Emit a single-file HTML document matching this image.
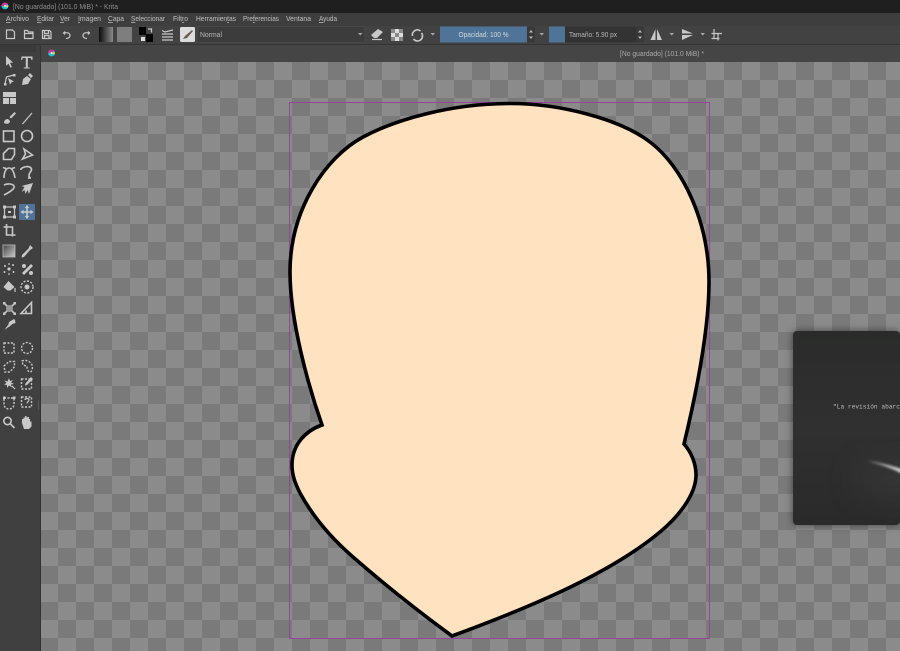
<!DOCTYPE html>
<html lang="es"><head><meta charset="utf-8"><title>Krita</title>
<style>html,body{margin:0;padding:0;width:900px;height:651px;overflow:hidden;background:#404040}
svg{display:block}
text{font-family:"Liberation Sans",sans-serif}
.m{font-size:7.5px;fill:#c0c0c0}
.i{fill:none;stroke:#c8c8c8;stroke-width:1.2}
.t{fill:none;stroke:#c8c8c8;stroke-width:1.6}
.f{fill:#c8c8c8;stroke:none}
.d{fill:none;stroke:#c8c8c8;stroke-width:1.4;stroke-dasharray:2 1.5}
</style></head><body>
<svg width="900" height="651" viewBox="0 0 900 651" xmlns="http://www.w3.org/2000/svg">
<defs>
<pattern id="c" x="40" y="62" width="36" height="36" patternUnits="userSpaceOnUse"><rect width="36" height="36" fill="#8b8b8b"/><rect width="18" height="18" fill="#7a7a7a"/><rect x="18" y="18" width="18" height="18" fill="#7a7a7a"/></pattern>
<pattern id="p2" x="391" y="29" width="8" height="8" patternUnits="userSpaceOnUse"><rect width="8" height="8" fill="#ddd"/><rect width="4" height="4" fill="#888"/><rect x="4" y="4" width="4" height="4" fill="#888"/></pattern>
<linearGradient id="g1" x1="0" x2="1"><stop offset="0" stop-color="#0c0c0c"/><stop offset="1" stop-color="#8a8a8a"/></linearGradient>
<linearGradient id="g2" x1="0" x2="1" y1="0" y2="1"><stop offset="0" stop-color="#444"/><stop offset="1" stop-color="#ccc"/></linearGradient>
<linearGradient id="card" x1="0" x2="0" y1="0" y2="1"><stop offset="0" stop-color="#2a2b2a"/><stop offset=".5" stop-color="#303030"/><stop offset="1" stop-color="#2a2a2a"/></linearGradient>
<filter id="b1" x="-50%" y="-50%" width="200%" height="200%"><feGaussianBlur stdDeviation="4"/></filter>
<filter id="b2" x="-50%" y="-100%" width="200%" height="300%"><feGaussianBlur stdDeviation="1.4"/></filter>
<filter id="b3" x="-60%" y="-60%" width="220%" height="220%"><feGaussianBlur stdDeviation="16"/></filter>
<clipPath id="cc"><rect x="793" y="331" width="107" height="194" rx="4"/></clipPath>
</defs>

<!-- chrome -->
<rect width="900" height="651" fill="#404040"/>
<rect width="900" height="13" fill="#1f1f1f"/>
<rect y="13" width="900" height="13" fill="#3e3e3e"/>
<rect y="26" width="900" height="19" fill="#424242"/>
<rect y="44" width="900" height="1" fill="#353535"/>
<rect x="41" y="45" width="859" height="17" fill="#454545"/>
<rect x="0" y="45" width="36" height="7" fill="#3a3a3a"/>
<rect x="40" y="45" width="1" height="606" fill="#333"/>

<!-- title -->
<circle cx="5" cy="6" r="3.400" fill="#18c4dc"/><path d="M1.600 6a3.400 3.400 0 0 1 6-2.200L5 6z" fill="#e42b9a"/><path d="M5 6l3.300-1a3.400 3.400 0 0 1-.6 3z" fill="#f0d040"/><circle cx="5" cy="6" r="1" fill="#eee"/>
<text x="13" y="9" font-size="7.5" fill="#8f8f8f" textLength="105" lengthAdjust="spacingAndGlyphs">[No guardado]  (101.0 MiB) * - Krita</text>

<!-- menu -->
<text class="m" x="6" y="21" textLength="23" lengthAdjust="spacingAndGlyphs"><tspan text-decoration="underline">A</tspan>rchivo</text>
<text class="m" x="37" y="21" textLength="17" lengthAdjust="spacingAndGlyphs"><tspan text-decoration="underline">E</tspan>ditar</text>
<text class="m" x="60" y="21" textLength="10" lengthAdjust="spacingAndGlyphs"><tspan text-decoration="underline">V</tspan>er</text>
<text class="m" x="78" y="21" textLength="23" lengthAdjust="spacingAndGlyphs"><tspan text-decoration="underline">I</tspan>magen</text>
<text class="m" x="108" y="21" textLength="16" lengthAdjust="spacingAndGlyphs"><tspan text-decoration="underline">C</tspan>apa</text>
<text class="m" x="131" y="21" textLength="34" lengthAdjust="spacingAndGlyphs"><tspan text-decoration="underline">S</tspan>eleccionar</text>
<text class="m" x="173" y="21" textLength="15" lengthAdjust="spacingAndGlyphs">Filt<tspan text-decoration="underline">r</tspan>o</text>
<text class="m" x="196" y="21" textLength="40" lengthAdjust="spacingAndGlyphs">Herramien<tspan text-decoration="underline">t</tspan>as</text>
<text class="m" x="243" y="21" textLength="36" lengthAdjust="spacingAndGlyphs">Pre<tspan text-decoration="underline">f</tspan>erencias</text>
<text class="m" x="286" y="21" textLength="25" lengthAdjust="spacingAndGlyphs">Ventana</text>
<text class="m" x="319" y="21" textLength="18" lengthAdjust="spacingAndGlyphs"><tspan text-decoration="underline">A</tspan>yuda</text>

<!-- top toolbar -->
<path class="i" d="M6.500 30h6l2 2v6.500h-8z"/>
<path class="i" d="M24.500 38.500v-8h3l1 1.500h4.500v6.500zM24.500 33.500h8.500"/>
<path class="i" d="M42.500 30.500h7l1.500 1.500v6.500h-8.500zM44.500 30.500v3h4v-3M44.500 38.500v-3h4.500v3"/>
<path class="i" d="M65 31.500l-1.500 1.500 1.500 1.500M64 33c4-1 6 .5 6 2.500s-2 3-4 3"/>
<path class="i" d="M88 31.500l1.500 1.500-1.500 1.500M89 33c-4-1-6 .5-6 2.500s2 3 4 3"/>
<rect x="99" y="27" width="14" height="15" fill="url(#g1)"/>
<rect x="117" y="27" width="15" height="15" fill="#7e7e7e"/>
<rect x="139" y="27" width="7" height="8" fill="#000"/><rect x="146" y="34" width="7" height="8" fill="#000"/>
<rect x="141" y="37" width="4" height="4" fill="#ddd"/>
<path class="i" d="M148 29h3.500v3.500"/>
<path class="i" d="M162 30.500l3 1.500 8-2M162 34h11M162 37h11M162 40h11"/>
<rect x="180" y="27" width="15" height="15" rx="1.500" fill="#dcdcdc"/>
<path d="M183 39l2-3 7-6 1 1-6 7z" fill="#6d5a4a"/>
<rect x="197" y="26.500" width="168" height="16" rx="2" fill="#3c3c3c" stroke="#4b4b4b" stroke-width=".8"/>
<text x="200" y="37" font-size="7.500" fill="#b8b8b8" textLength="22" lengthAdjust="spacingAndGlyphs">Normal</text>
<path d="M358 33h4.500l-2.250 2.500z" fill="#aaa"/>
<path class="f" d="M371 35l7-6 5 3-6 6h-3z"/><path class="i" d="M372 39.500h10"/>
<rect x="391" y="29" width="12" height="12" fill="url(#p2)"/>
<path class="t" d="M412.500 36a5 5 0 0 1 8-5M421.500 33a5 5 0 0 1-8 6"/>
<path d="M430.500 33h4.500l-2.250 2.500z" fill="#aaa"/>
<rect x="440" y="26.500" width="87" height="16" fill="#4f7497"/>
<text x="483.500" y="37" text-anchor="middle" font-size="7.500" fill="#d0d8e0" textLength="50" lengthAdjust="spacingAndGlyphs">Opacidad: 100 %</text>
<rect x="527" y="26.500" width="8" height="16" rx="1.500" fill="#383838"/>
<path d="M529 32.500h4l-2-2.500zM529 36.500h4l-2 2.500z" fill="#bbb"/>
<path d="M539.500 33h4.500l-2.250 2.500z" fill="#aaa"/>
<rect x="549" y="26.500" width="16" height="16" fill="#4f7497"/>
<rect x="565" y="26.500" width="71" height="16" fill="#333"/>
<text x="569" y="37" font-size="7.500" fill="#b8b8b8" textLength="48" lengthAdjust="spacingAndGlyphs">Tamaño: 5.90 px</text>
<rect x="636" y="26.500" width="8" height="16" rx="1.500" fill="#383838"/>
<path d="M638 32.500h4l-2-2.500zM638 36.500h4l-2 2.500z" fill="#bbb"/>
<path class="f" d="M655.500 29v11h-5zM657 29v11h5z"/>
<path d="M669.500 33h4.500l-2.250 2.500z" fill="#aaa"/>
<path class="f" d="M682 29l11 4.500h-11zM682 35h11l-11 5z"/>
<path d="M700.500 33h4.500l-2.250 2.500z" fill="#aaa"/>
<path class="i" d="M714 29v9M711.500 33.500h10.500M718 33v7.500M711.500 38.500h8"/>

<!-- tab -->
<circle cx="51.500" cy="53" r="3.400" fill="#18c4dc"/><path d="M48.100 53a3.400 3.400 0 0 1 6-2.200L51.500 53z" fill="#e42b9a"/><path d="M51.500 53l3.300-1a3.400 3.400 0 0 1-.6 3z" fill="#f0d040"/><circle cx="51.500" cy="53" r="1" fill="#eee"/>
<text x="620" y="56" font-size="7.500" fill="#ababab" textLength="84" lengthAdjust="spacingAndGlyphs">[No guardado]  (101.0 MiB) *</text>

<!-- canvas -->
<rect x="41" y="62" width="859" height="589" fill="url(#c)"/>

<!-- dark card -->
<rect x="793" y="331" width="107" height="194" rx="4" fill="#000" opacity=".5" filter="url(#b1)"/>
<g clip-path="url(#cc)">
<rect x="793" y="331" width="107" height="194" fill="url(#card)"/>
<ellipse cx="900" cy="480" rx="45" ry="18" fill="#4a4a4a" opacity=".35" filter="url(#b3)"/>
<path d="M868 461C880 464 892 468 905 475L905 470C892 466 880 463 868 461z" fill="#dedede" filter="url(#b2)"/>
<text x="833" y="408.500" style="font-family:'Liberation Mono',monospace" font-size="6.200" fill="#bdbdbd" textLength="70.700" lengthAdjust="spacing">"La revisión abarca</text>
</g>

<!-- shape -->
<rect x="289.500" y="102.500" width="420" height="536" fill="none" stroke="#94459a" stroke-width="1"/>
<path d="M452 636C418 611 385 585 353 557C330 537 312 515 300 493C295 483 292 475 292 465C292 445 305 431 322 425C308 385 290 320 290 272C290 210 325 157.500 363 137C395 120 450 103.500 510 103.500C560 103.500 620 119 650 142C683 167 709 222 709 282C709 330 697 390 684 444C691 452 696 463 696 475C696 495 678 517 660 532C630 557 590 578 560 592C530 606 490 622 452 636Z" fill="#ffe3c0" stroke="#000" stroke-width="3.600" stroke-linejoin="miter"/>

<!-- toolbox -->
<rect x="19" y="204" width="16" height="16" rx="1" fill="#4f7497"/>
<path class="f" d="M6 56l7 6.500-3 .5 2 4-1.500.7-2-4-2.500 2z"/>
<path class="f" d="M21.500 56.500h11v3.500h-1l-.7-2h-3v9.500h2v1h-6v-1h2V58h-3l-.7 2h-1z"/>
<path class="i" d="M5 84l1.500-7 7-2"/><path class="f" d="M8 78l6 3.500-2.500.7-1.500 2.500z"/><rect x="4" y="83" width="2.500" height="2.500" class="f"/><rect x="13" y="74" width="2.500" height="2.500" class="f"/>
<path class="f" d="M22 85l1-6 4-3 4 3-3 5zM28 75l2-2 3 3-2 2z"/>
<path class="f" d="M3 92h13v5H3zM3 98h6v6H3zM10 98h6v6h-6z"/>
<path class="f" d="M4 123c0-3 2-4 4-4l2 2c0 2-2 4-6 2zM9.500 117l5-5 1.500 1.500-5 5z"/>
<path class="i" d="M22.500 124l9.500-11"/>
<rect x="3.500" y="131" width="10.500" height="10.500" class="t"/>
<circle cx="27" cy="136" r="5.500" class="t"/>
<path class="t" d="M3.500 159.500v-6l5-5h6v6l-3 5z"/>
<path class="t" d="M24 149l8.500 6-10 4 3-5z"/>
<path class="t" d="M4 178c0-6 2-10 5-10s5 4 6 10M3 167.500l3 1M15 167.500l-3 1"/>
<path class="t" d="M21 169c3-3 8-3 10-1 2 2-2 5-2 7 0 2 1 3 2 3M21 168v2M29 176v3"/>
<path class="t" d="M4 185c4-2 9-1 10 1s-2 5-10 9"/>
<path class="f" d="M33 183l-4 11-1.500-4-2 4-1-4-3 2 3-5-3-1z"/>
<rect x="4.500" y="207" width="10" height="10" class="i"/><g class="f"><rect x="3" y="205.500" width="3" height="3"/><rect x="13" y="205.500" width="3" height="3"/><rect x="3" y="215.500" width="3" height="3"/><rect x="13" y="215.500" width="3" height="3"/><rect x="8" y="211" width="3" height="2"/></g>
<path class="t" d="M27 206.500v11M21.500 212h11"/><path class="f" d="M27 205l2.200 3h-4.400zM27 219l2.200-3h-4.400zM20.500 212l3-2.200v4.400zM33.500 212l-3-2.200v4.400z"/>
<path class="t" d="M6.500 224v11h9M3.500 227h9v9.500"/>
<rect x="3" y="245" width="12" height="12" fill="url(#g2)" stroke="#bbb" stroke-width=".8"/>
<path class="f" d="M30 245l3 3-2 1.500-1 .5-6 7-2.500.5.5-2.500 6.500-6.500.5-1z"/>
<g class="f"><circle cx="9" cy="269" r="1.600"/><circle cx="5" cy="266" r="1"/><circle cx="13" cy="265" r="1"/><circle cx="4.500" cy="272" r="1"/><circle cx="13.500" cy="272" r="1"/><circle cx="9" cy="264" r=".9"/><circle cx="9" cy="274" r=".9"/></g>
<path class="f" d="M22 273l9-9 2 2-9 9z"/><circle cx="24" cy="266" r="2" class="f"/><circle cx="31" cy="273" r="2" class="f"/>
<path class="f" d="M3.500 287l5-6 6 6-4 3.500h-3z"/><path class="i" d="M15 288v4"/>
<circle cx="27" cy="287" r="6" class="d"/><circle cx="27" cy="287" r="2.500" class="f"/>
<path class="t" d="M4 303l11 11M15 303l-11 11"/><circle cx="9.500" cy="308.500" r="3.500" fill="#999"/><g class="f"><rect x="3" y="302" width="2.500" height="2.500"/><rect x="13.500" y="302" width="2.500" height="2.500"/><rect x="3" y="312.500" width="2.500" height="2.500"/><rect x="13.500" y="312.500" width="2.500" height="2.500"/></g>
<path class="t" d="M21 313.500l10.500-11v11zM26 313.500v-3"/>
<path class="f" d="M9 322l5-3 1 1 .5 3-3 1-3 2.500-3 2-2 1.500 2-3 2-2.500z"/>
<rect x="4" y="343" width="10" height="10" class="d"/>
<circle cx="27" cy="348" r="5.500" class="d"/>
<path class="d" d="M4 366l5-4.500h5.500v5l-4.500 5.500h-5z"/>
<path class="d" d="M22 361c4-2 9 1 10 4s0 7-2 7-3-3-3-5-3-1-4-2z"/>
<path class="f" d="M9 378l1 3 3-1-2 2.500 3 1.500-3 .5 1 3-3-2-2 2.500v-3l-3-.5 2.500-1.500-2-2.500 3 1z"/><path class="i" d="M12 386l3 3"/>
<rect x="21.500" y="379" width="10" height="10" class="d"/><path class="f" d="M31 377l2 2-6 6-2 .5.5-2z"/>
<path class="d" d="M4 398h10v6c0 3-2 5-5 5s-5-2-5-5z"/><g class="f"><rect x="3" y="396.500" width="2.500" height="2.500"/><rect x="13" y="396.500" width="2.500" height="2.500"/></g>
<rect x="21.500" y="397" width="10" height="10" class="d"/><path class="i" d="M25 400c0-2 4-2 4 0 0 1.500-2 1.500-2 3.500"/>
<circle cx="7.500" cy="421" r="3.700" class="t"/><path class="t" d="M10.500 424l4 4"/>
<path class="f" d="M22 423v-4h1.500v-1.500h1.500V416h1.500v1.500h1V417h1.500v2H30v2.500h1.500v5L29 429h-5z"/>
<rect x="38" y="400" width="1" height="10" fill="#555"/>
</svg>
</body></html>
